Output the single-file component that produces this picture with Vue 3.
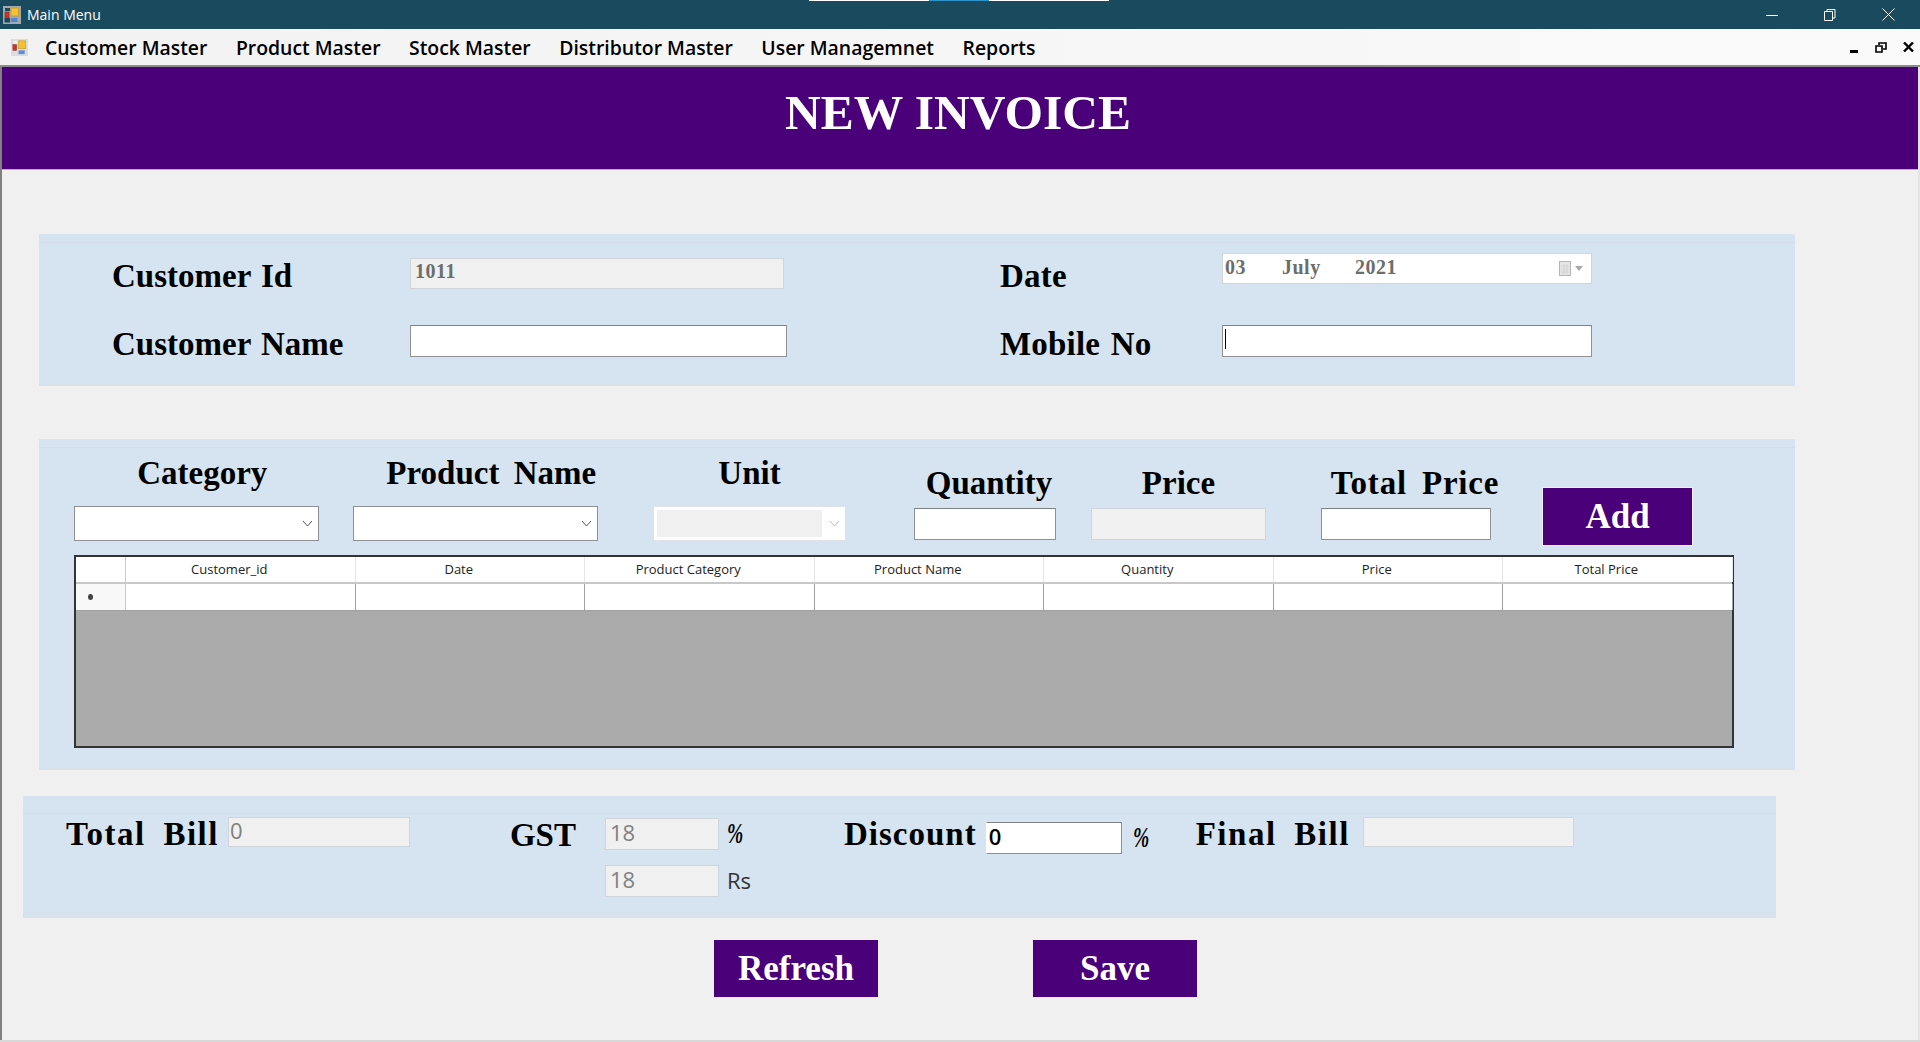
<template>
  <div class="window">
    <header class="titlebar">
      <div class="strip"><i class="strip-a"></i><i class="strip-b"></i><i class="strip-c"></i></div>
      <svg class="app-icon" viewBox="0 0 18 18">
        <path d="M0 0H18V18H0ZM2 2V5H7V2ZM1.5 12V16.5H7V12Z" fill="#a3a9ae" fill-rule="evenodd" />
        <rect x="8" y="2" width="7.5" height="8" fill="#f2c230" stroke="#c89a1c" stroke-width="0.8" />
        <rect x="2" y="6" width="4" height="6" fill="#c8342c" stroke="#8e2a28" stroke-width="0.6" />
        <rect x="8" y="12" width="6.5" height="4" fill="#4f86d8" />
      </svg>
      <span class="app-title">Main Menu</span>
      <div class="win-buttons">
        <svg width="12" height="12" viewBox="0 0 12 12"><path d="M0 6.5H12" stroke="#fff" fill="none" /></svg>
        <svg width="12" height="12" viewBox="0 0 12 12"><path d="M0.5 2.5H8.5V11.5H0.5ZM3 2.5V0.5H11V9H8.5" stroke="#fff" fill="none" /></svg>
        <svg width="13" height="13" viewBox="0 0 13 13"><path d="M0.5 0.5L12.5 12.5M12.5 0.5L0.5 12.5" stroke="#fff" fill="none" /></svg>
      </div>
    </header>

    <nav class="menubar">
      <svg class="menu-icon" viewBox="0 0 18 18">
        <rect x="0" y="0" width="18" height="18" fill="#dcdcdc" />
        <rect x="2" y="2" width="5" height="3" fill="#f0f0f0" />
        <rect x="8" y="2" width="7.5" height="8" fill="#f2c230" stroke="#cda22a" stroke-width="0.8" />
        <rect x="2" y="6" width="4" height="6" fill="#c8342c" stroke="#9c3a38" stroke-width="0.6" />
        <rect x="8" y="12" width="6.5" height="4" fill="#5b8fdc" />
      </svg>
      <a v-for="item in menuItems" :key="item" class="menu-item">{{ item }}</a>
      <div class="mdi-buttons">
        <svg width="9" height="11" viewBox="0 0 9 11"><rect x="0" y="8" width="8" height="3" fill="#000" /></svg>
        <svg width="12" height="11" viewBox="0 0 12 11"><path d="M1 4H7V10H1ZM4 3V1H11V7H8" stroke="#000" stroke-width="1.6" fill="none" /></svg>
        <svg width="11" height="10" viewBox="0 0 11 10"><path d="M1 0.5L10 9.5M10 0.5L1 9.5" stroke="#000" stroke-width="2.4" fill="none" /></svg>
      </div>
    </nav>

    <main class="content">
      <div class="banner">NEW INVOICE</div>

      <section class="panel panel-customer">
        <div class="panel-body customer-grid">
          <label class="big-label">Customer Id</label>
          <input class="field off id-field" :value="customerId" readonly />
          <label class="big-label right-label">Date</label>
          <div class="date-picker">
            <span class="d-day">03</span><span class="d-month">July</span><span>2021</span>
            <svg class="cal" width="24" height="16" viewBox="0 0 24 16">
              <rect x="0.5" y="0.5" width="11" height="14" fill="#e6e6e6" stroke="#b5b5b5" />
              <path d="M2 5H10M2 8H10M2 11H10M5 3V13M8 3V13" stroke="#d4d4d4" fill="none" />
              <path d="M16 5H24L20 10Z" fill="#a8a8a8" />
            </svg>
          </div>
          <label class="big-label">Customer Name</label>
          <input class="field" />
          <label class="big-label right-label">Mobile No</label>
          <div class="focused">
            <input class="field full" />
            <span class="caret"></span>
          </div>
        </div>
      </section>

      <section class="panel panel-items">
        <div class="panel-body">
          <div class="entry-row">
            <div class="entry cat">
              <label class="big-label">Category</label>
              <div class="combo"><svg width="11" height="7" viewBox="0 0 11 7"><path d="M1 1L5.5 6L10 1" stroke="#555" fill="none" /></svg></div>
            </div>
            <div class="entry prod">
              <label class="big-label">Product Name</label>
              <div class="combo"><svg width="11" height="7" viewBox="0 0 11 7"><path d="M1 1L5.5 6L10 1" stroke="#555" fill="none" /></svg></div>
            </div>
            <div class="entry unit">
              <label class="big-label">Unit</label>
              <div class="combo off"><span class="combo-fill"></span><svg width="11" height="7" viewBox="0 0 11 7"><path d="M1 1L5.5 6L10 1" stroke="#bbb" fill="none" /></svg></div>
            </div>
            <div class="entry low qty">
              <label class="big-label">Quantity</label>
              <input class="field" />
            </div>
            <div class="entry low price">
              <label class="big-label">Price</label>
              <input class="field off" readonly />
            </div>
            <div class="entry low total">
              <label class="big-label">Total Price</label>
              <input class="field" />
            </div>
            <button class="action add">Add</button>
          </div>

          <div class="grid">
            <div class="grid-head">
              <div class="corner"></div>
              <div v-for="col in columns" :key="col" class="th">{{ col }}</div>
            </div>
            <div class="grid-row">
              <div class="row-head"><i class="dot"></i></div>
              <div v-for="col in columns" :key="col" class="td"></div>
            </div>
          </div>
        </div>
      </section>

      <section class="panel panel-bill">
        <div class="panel-body bill-row">
          <div class="bill-col col-total">
            <label class="big-label wide">Total Bill</label>
            <input class="field off sans w-total" value="0" readonly />
          </div>
          <div class="bill-col col-gst">
            <label class="big-label">GST</label>
            <div class="gst-stack">
              <div class="gst-line">
                <input class="field off sans w-gst" :value="gst" readonly />
                <span class="pct">%</span>
              </div>
              <div class="gst-line">
                <input class="field off sans w-gst" :value="gst" readonly />
                <span class="rs">Rs</span>
              </div>
            </div>
          </div>
          <div class="bill-col col-disc">
            <label class="big-label">Discount</label>
            <input class="field sans dark w-disc" value="0" />
            <span class="pct">%</span>
          </div>
          <div class="bill-col col-final">
            <label class="big-label wide">Final Bill</label>
            <input class="field off w-final" readonly />
          </div>
        </div>
      </section>

      <div class="actions">
        <button class="action">Refresh</button>
        <button class="action">Save</button>
      </div>
    </main>
    <div class="statusline"></div>
  </div>
</template>

<script setup>
const menuItems = ['Customer Master', 'Product Master', 'Stock Master', 'Distributor Master', 'User Managemnet', 'Reports']
const columns = ['Customer_id', 'Date', 'Product Category', 'Product Name', 'Quantity', 'Price', 'Total Price']
const customerId = '1011'
const gst = '18'
</script>

<style>
html, body {
  margin: 0;
  overflow: hidden;
}
</style>

<style scoped>
.window {
  width: 1920px;
  height: 1042px;
  display: flex;
  flex-direction: column;
  background: #f0f0f0;
  font-family: "Liberation Serif", serif;
  overflow: hidden;
}

/* title bar */
.titlebar {
  position: relative;
  height: 29px;
  flex: none;
  display: flex;
  align-items: center;
  background: #1a4a5e;
  color: #fff;
}
.strip {
  position: absolute;
  top: 0;
  left: 809px;
  display: flex;
  height: 1px;
}
.strip-a, .strip-c { width: 120px; background: #fff; }
.strip-b { width: 60px; background: #2a93c9; }
.app-icon { width: 18px; height: 18px; margin-left: 3px; }
.app-title {
  margin-left: 6px;
  font: 14px "Open Sans", sans-serif;
}
.win-buttons {
  margin-left: auto;
  display: flex;
  align-items: center;
  gap: 46px;
  padding-right: 25px;
}

/* menu */
.menubar {
  height: 36px;
  flex: none;
  display: flex;
  align-items: center;
  background: linear-gradient(90deg, #f2f2f2, #fafafa);
  border-bottom: 2px solid #8c8c8c;
}
.menu-icon { width: 17px; height: 17px; margin: 0 17px 0 11px; }
.menu-item {
  margin-right: 28.5px;
  font: 600 19.4px "Open Sans", sans-serif;
  color: #000;
}
.mdi-buttons {
  margin-left: auto;
  display: flex;
  align-items: center;
  gap: 16px;
  padding-right: 6px;
}

/* main */
.content {
  flex: 1;
  min-height: 0;
  border-left: 2px solid #808080;
  border-right: 2px solid #e4e4e4;
}
.banner {
  display: flex;
  justify-content: center;
  padding: 0 4px 9px 0;
  height: 93px;
  line-height: 91px;
  background: #4a0079;
  border-bottom: 1px solid #c6a6da;
  color: #fff;
  font-weight: 700;
  font-size: 49.5px;
}

.panel {
  background: #d6e4f1;
  padding-top: 8px;
  border-bottom: 2px solid #dbe3ea;
}
.panel-body { border-top: 1px solid #d2dde8; box-sizing: border-box; }

.big-label {
  font-weight: 700;
  font-size: 33px;
  line-height: 38px;
  word-spacing: 6px;
  color: #000;
  white-space: nowrap;
}
.big-label.wide { letter-spacing: 1.5px; word-spacing: 8px; }

.field {
  display: block;
  box-sizing: border-box;
  height: 32px;
  padding: 0 0 4px 4px;
  margin: 0;
  outline: none;
  border: 1px solid #8d9196;
  border-top-color: #7f8388;
  background: #fff;
  font: 700 20px "Liberation Serif", serif;
  letter-spacing: 0.5px;
  color: #6d6d6d;
  border-radius: 0;
}
.field.off { background: #f0f0f0; border-color: #cfd5db; }
.field.sans { font: 22px "Open Sans", sans-serif; color: #808080; letter-spacing: 0; padding-left: 4px; }
.field.dark { color: #000; font-weight: 600; border-left-color: #fff; padding-left: 2px; }
.field.full { width: 100%; }

/* customer panel */
.panel-customer {
  margin: 64px 0 0 37px;
  width: 1756px;
  height: 152px;
  box-sizing: border-box;
}
.customer-grid {
  display: grid;
  grid-template-columns: 298px 377px 435px 370px;
  grid-template-rows: 60px 76px;
  padding-left: 73px;
  align-items: center;
}
.customer-grid .big-label { margin-top: 5px; word-spacing: 2px; }
.right-label { margin-left: 213px; letter-spacing: 0.2px; }
.customer-grid > .field { width: 377px; }
.customer-grid > .id-field { width: 374px; height: 31px; }
.date-picker {
  box-sizing: border-box;
  width: 370px;
  height: 31px;
  margin-bottom: 9px;
  display: flex;
  align-items: center;
  padding: 0 8px 2px 2px;
  background: #fff;
  border: 1px solid #cfd5db;
  font: 700 20px "Liberation Serif", serif;
  letter-spacing: 0.5px;
  color: #6d6d6d;
}
.d-day { width: 57px; }
.d-month { width: 73px; }
.cal { margin-left: auto; margin-top: 3px; }
.focused { position: relative; width: 370px; }
.caret {
  position: absolute;
  left: 3px;
  top: 4px;
  width: 1px;
  height: 20px;
  background: #000;
}

/* items panel */
.panel-items {
  margin: 53px 0 0 37px;
  width: 1756px;
  height: 331px;
  box-sizing: border-box;
}
.entry-row {
  display: flex;
  align-items: flex-start;
  padding: 0 0 0 35px;
  height: 107px;
}
.entry {
  display: flex;
  flex-direction: column;
  align-items: center;
  box-sizing: border-box;
  padding-top: 6px;
}
.entry .big-label { height: 52px; }
.entry.low { padding-top: 16px; }
.entry.low .big-label { height: 44px; }
.cat { width: 244.5px; }
.prod { width: 245.5px; margin-left: 34px; }
.unit { width: 193px; margin-left: 55px; }
.qty { width: 142px; margin-left: 68px; }
.price { width: 175px; margin-left: 35px; }
.total { width: 170px; margin-left: 55px; }
.entry .field { width: 100%; }
.cat .big-label { margin-left: 12px; }
.prod .big-label { margin-left: 32px; }
.qty .big-label { margin-left: 8px; }
.total .big-label { margin-left: 18px; letter-spacing: 0.8px; }
.combo {
  box-sizing: border-box;
  width: 100%;
  height: 35px;
  display: flex;
  align-items: center;
  justify-content: flex-end;
  padding: 0 5px 0 4px;
  background: #fff;
  border: 1px solid #8d9196;
}
.combo.off { border-color: #dde3e8; padding-left: 3px; }
.combo-fill {
  flex: 1;
  height: 27px;
  background: #f0f0f0;
  margin-right: 7px;
}
.action {
  box-sizing: border-box;
  padding: 0;
  border: 1px solid #f2ecf6;
  background: #4a0079;
  color: #fff;
  font: 700 35px "Liberation Serif", serif;
}
.add {
  width: 151px;
  height: 59px;
  margin: 39px 0 0 51px;
}

/* data grid */
.grid {
  box-sizing: border-box;
  width: 1660px;
  height: 193px;
  margin-left: 35px;
  border: 2px solid #333;
  background: #ababab;
}
.grid-head, .grid-row {
  display: grid;
  grid-template-columns: 50px repeat(7, 229.5px);
}
.grid-head {
  height: 25px;
  background: #fff;
  border-bottom: 2px solid #c8c8c8;
}
.corner { border-right: 1px solid #c8c8c8; }
.th {
  box-sizing: border-box;
  padding-right: 22px;
  border-right: 1px solid #e6e6e6;
  text-align: center;
  font: 13px/25px "Open Sans", sans-serif;
  color: #222;
}
.grid-row { height: 26px; background: #fff; border-bottom: 1px solid #a0a0a0; }
.row-head {
  display: flex;
  align-items: center;
  padding-left: 12px;
  background: #f8f8f8;
  border-right: 1px solid #c8c8c8;
}
.dot { width: 5px; height: 6px; border-radius: 50%; background: #444; }
.td { border-right: 1px solid #a0a0a0; }

/* bill panel */
.panel-bill {
  margin: 26px 0 0 21px;
  width: 1753px;
  height: 122px;
  box-sizing: border-box;
  padding-top: 17px;
}
.bill-row { display: flex; align-items: flex-start; }
.bill-col { display: flex; align-items: flex-start; }
.col-total { margin-left: 43px; }
.col-total .big-label, .col-final .big-label { margin-top: 1px; }
.w-total { width: 182px; height: 30px; margin: 3px 0 0 9px; padding-left: 1px !important; }
.col-gst { margin-left: 100px; }
.col-gst .big-label { margin-top: 2px; }
.gst-stack { margin: 4px 0 0 29px; display: flex; flex-direction: column; gap: 15px; }
.gst-line { display: flex; align-items: flex-start; gap: 8px; }
.w-gst { width: 114px; height: 32px; }
.pct {
  display: inline-block;
  width: 14px;
  margin-top: 3px;
  font: italic 700 30px/24px "Liberation Serif", serif;
  transform: scaleX(0.65);
  transform-origin: left center;
  color: #000;
}
.rs { font: 22px/26px "Open Sans", sans-serif; color: #333; margin-top: 2px; }
.col-disc { margin-left: 93px; }
.col-disc .big-label { margin-top: 1px; letter-spacing: 1px; }
.w-disc { width: 136px; height: 32px; margin: 8px 11px 0 9px; }
.col-disc .pct { margin-top: 11px; }
.col-final { margin-left: 49px; }
.w-final { width: 211px; height: 30px; margin: 3px 0 0 13px; }

.actions {
  display: flex;
  gap: 153px;
  margin: 21px 0 0 711px;
}
.actions .action { width: 166px; height: 59px; }

.statusline { height: 2px; flex: none; background: #d8d8d8; }
</style>
